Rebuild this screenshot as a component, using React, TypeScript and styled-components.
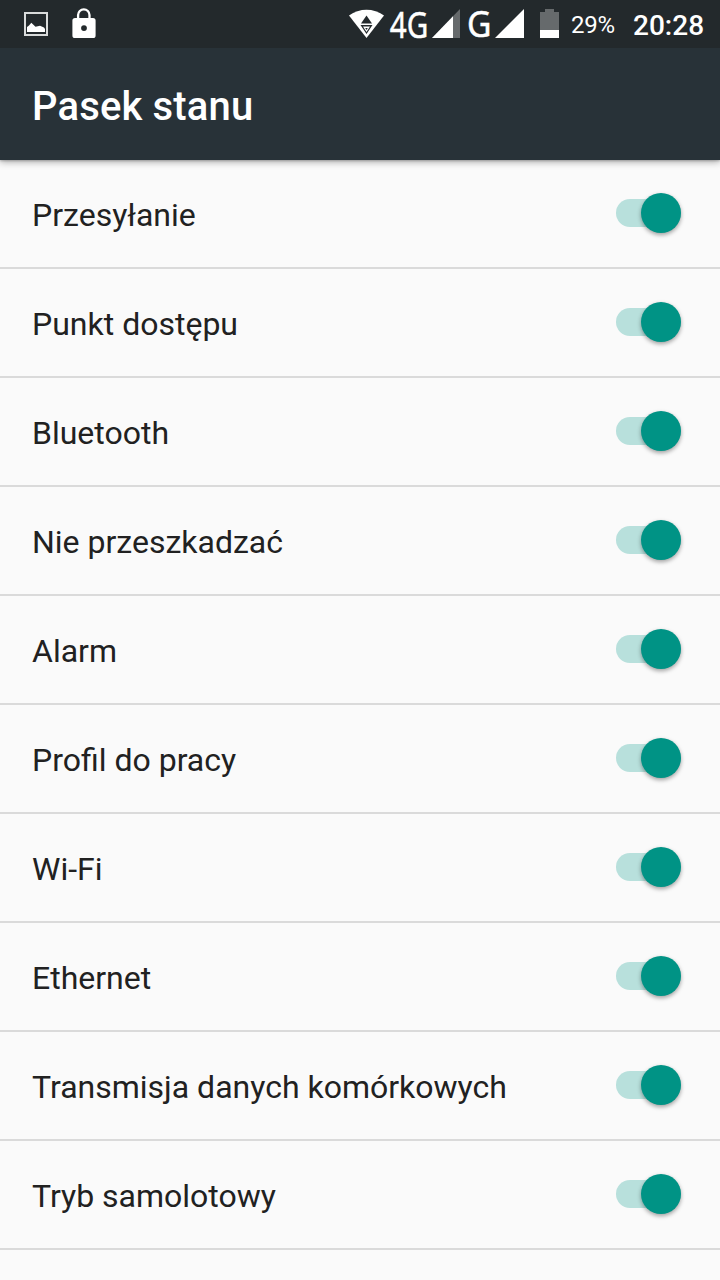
import React from "react";
import styled, { createGlobalStyle } from "styled-components";

const GlobalStyle = createGlobalStyle`
  * { box-sizing: border-box; }
  body {
    margin: 0;
    background: #fafafa;
    font-family: Roboto, sans-serif;
    overflow: hidden;
  }
`;

const Screen = styled.div`
  width: 720px;
  height: 1280px;
  overflow: hidden;
  display: flex;
  flex-direction: column;
  background: #fafafa;
`;

const StatusBar = styled.div`
  flex: none;
  height: 48px;
  background: #23292c;
  color: #fff;
  display: flex;
  align-items: center;
  justify-content: space-between;
  padding: 0 16px 0 24px;
  z-index: 2;
`;

const StatusGroup = styled.div`
  display: flex;
  align-items: center;
  height: 48px;
`;

const Glyph = styled.svg<{ $gap?: number }>`
  display: block;
  flex: none;
  overflow: visible;
  margin-left: ${(p) => p.$gap ?? 0}px;
`;

const NetworkLabel = styled.text`
  font-family: "Noto Sans", sans-serif;
  font-size: 36px;
  fill: #fff;
  stroke: #fff;
  stroke-width: 0.5px;
`;

const BatteryLevel = styled.span`
  width: 44px;
  margin-left: 12px;
  padding-top: 2px;
  font-size: 24px;
  letter-spacing: -0.3px;
  line-height: 28px;
  white-space: nowrap;
`;

const Clock = styled.span`
  width: 71px;
  margin-left: 18px;
  padding-top: 4px;
  font-size: 28px;
  font-weight: 500;
  line-height: 32px;
  white-space: nowrap;
`;

const AppBar = styled.header`
  flex: none;
  height: 112px;
  padding: 6px 32px 0;
  display: flex;
  align-items: center;
  background: #283238;
  box-shadow: 0 2px 7px rgba(0, 0, 0, 0.32), 0 1px 2px rgba(0, 0, 0, 0.2);
  z-index: 1;
`;

const Title = styled.h1`
  margin: 0;
  color: #fff;
  font-size: 40px;
  font-weight: 500;
  letter-spacing: 0.15px;
  line-height: 48px;
`;

const List = styled.div`
  display: flex;
  flex-direction: column;
`;

const Row = styled.div`
  flex: none;
  height: 109px;
  padding: 0 39px 0 32px;
  border-bottom: 2px solid #dadada;
  display: flex;
  align-items: center;
  justify-content: space-between;
`;

const Label = styled.span`
  padding-top: 3px;
  color: #212121;
  font-size: 32px;
  line-height: 38px;
`;

const Track = styled.div<{ $on: boolean }>`
  width: 65px;
  height: 28px;
  margin-bottom: 1px;
  border-radius: 14px;
  display: flex;
  align-items: center;
  justify-content: ${(p) => (p.$on ? "flex-end" : "flex-start")};
  background: ${(p) => (p.$on ? "#b8e0dc" : "#b9b9b9")};
`;

const Thumb = styled.div<{ $on: boolean }>`
  flex: none;
  width: 40px;
  height: 40px;
  border-radius: 50%;
  background: ${(p) => (p.$on ? "#009385" : "#f1f1f1")};
  box-shadow: 0 2px 4px rgba(0, 0, 0, 0.36);
`;

const items = [
  "Przesyłanie",
  "Punkt dostępu",
  "Bluetooth",
  "Nie przeszkadzać",
  "Alarm",
  "Profil do pracy",
  "Wi-Fi",
  "Ethernet",
  "Transmisja danych komórkowych",
  "Tryb samolotowy",
];

function Switch({ on }: { on: boolean }) {
  return (
    <Track $on={on}>
      <Thumb $on={on} />
    </Track>
  );
}

function ImageIcon() {
  return (
    <Glyph width="24" height="48" viewBox="0 0 24 48">
      <rect x="1" y="13" width="22" height="22" fill="none" stroke="#d9dbdb" strokeWidth="2" />
      <path d="M3 32v-5l2-1.500 2.300-2.700 4.200 4 4.500-1 4 1.700 1 1.500v3z" fill="#fff" />
    </Glyph>
  );
}

function LockIcon() {
  return (
    <Glyph $gap={24} width="24" height="48" viewBox="0 0 24 48">
      <path d="M6.1 19v-4a5.7 5.700 0 0 1 11.400 0V19" fill="none" stroke="#fff" strokeWidth="2.300" />
      <path
        fillRule="evenodd"
        d="M3 18h18a2.600 2.600 0 0 1 2.600 2.600v14.800A2.600 2.600 0 0 1 21 38H3a2.600 2.600 0 0 1-2.600-2.600V20.600A2.600 2.600 0 0 1 3 18zM12 25.200a2.900 2.900 0 1 0 0 5.800 2.900 2.900 0 0 0 0-5.800z"
        fill="#fff"
      />
    </Glyph>
  );
}

function WifiIcon() {
  return (
    <Glyph width="35" height="48" viewBox="0 0 35 48">
      <path d="M0 15.500C10.500 7.800 24.500 7.800 35 15.500L17.500 38z" fill="#fff" />
      <path d="M17.500 15.500l5.500 8H12zM11.500 25h12L17.500 34z" fill="#23292c" />
      <path d="M14 26.500h7l-3.500 5.500z" fill="#fff" />
      <path d="M16.200 28h2.600l-1.300 2z" fill="#23292c" />
    </Glyph>
  );
}

function BatteryIcon() {
  return (
    <Glyph $gap={16} width="19" height="48" viewBox="0 0 19 48">
      <path d="M0 12h5V9h9v3h5v18H0z" fill="#666a6c" />
      <path d="M0 30h19v8H0z" fill="#fff" />
    </Glyph>
  );
}

export default function App() {
  return (
    <>
      <GlobalStyle />
      <Screen>
        <StatusBar>
          <StatusGroup>
            <ImageIcon />
            <LockIcon />
          </StatusGroup>
          <StatusGroup>
            <WifiIcon />
            <Glyph $gap={5} width="40" height="48" viewBox="0 0 40 48">
              <NetworkLabel x="0.800" y="37.500" textLength="38.500" lengthAdjust="spacingAndGlyphs">
                4G
              </NetworkLabel>
            </Glyph>
            <Glyph $gap={3} width="28" height="48" viewBox="0 0 28 48">
              <path d="M28 9v29H0z" fill="#666a6c" />
              <path d="M21 16.300V38H0z" fill="#fff" />
            </Glyph>
            <Glyph $gap={7} width="25" height="48" viewBox="0 0 25 48">
              <NetworkLabel x="0" y="37" textLength="24.500" lengthAdjust="spacingAndGlyphs">
                G
              </NetworkLabel>
            </Glyph>
            <Glyph $gap={3} width="29" height="48" viewBox="0 0 29 48">
              <path d="M29 9v29H0z" fill="#fff" />
            </Glyph>
            <BatteryIcon />
            <BatteryLevel>29%</BatteryLevel>
            <Clock>20:28</Clock>
          </StatusGroup>
        </StatusBar>
        <AppBar>
          <Title>Pasek stanu</Title>
        </AppBar>
        <List>
          {items.map((name) => (
            <Row key={name}>
              <Label>{name}</Label>
              <Switch on />
            </Row>
          ))}
        </List>
      </Screen>
    </>
  );
}
